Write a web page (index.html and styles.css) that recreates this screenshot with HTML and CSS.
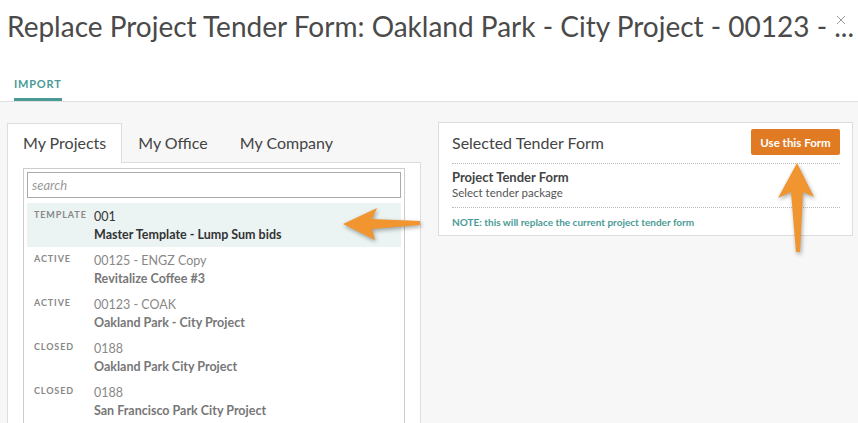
FILE: index.html
```html
<!DOCTYPE html>
<html>
<head>
    <title>Replace Project Tender Form</title>
    <link rel="stylesheet" href="styles.css">
</head>
<body>
    <div class="modal">
        <div class="modal-header">
            <h1 class="modal-title">Replace Project Tender Form: Oakland Park - City Project - 00123 - ...</h1>
            <button class="close-btn" title="Close">
                <svg width="10" height="10" viewBox="0 0 10 10"><path d="M1 1L9 9M9 1L1 9" stroke="#9a9a9a" stroke-width="1"/></svg>
            </button>
            <div class="nav-tabs">
                <span class="nav-tab active">IMPORT</span>
            </div>
        </div>

        <div class="modal-body">
            <div class="left-col">
                <div class="source-tabs">
                    <span class="source-tab active">My Projects</span>
                    <span class="source-tab">My Office</span>
                    <span class="source-tab">My Company</span>
                </div>
                <div class="source-panel">
                    <div class="project-list">
                        <input type="text" class="search" placeholder="search">
                        <div class="project-row selected">
                            <span class="status">TEMPLATE</span>
                            <div class="project-info">
                                <div class="project-num">001</div>
                                <div class="project-name">Master Template - Lump Sum bids</div>
                            </div>
                        </div>
                        <div class="project-row">
                            <span class="status">ACTIVE</span>
                            <div class="project-info">
                                <div class="project-num">00125 - ENGZ Copy</div>
                                <div class="project-name">Revitalize Coffee #3</div>
                            </div>
                        </div>
                        <div class="project-row">
                            <span class="status">ACTIVE</span>
                            <div class="project-info">
                                <div class="project-num">00123 - COAK</div>
                                <div class="project-name">Oakland Park - City Project</div>
                            </div>
                        </div>
                        <div class="project-row">
                            <span class="status">CLOSED</span>
                            <div class="project-info">
                                <div class="project-num">0188</div>
                                <div class="project-name">Oakland Park City Project</div>
                            </div>
                        </div>
                        <div class="project-row">
                            <span class="status">CLOSED</span>
                            <div class="project-info">
                                <div class="project-num">0188</div>
                                <div class="project-name">San Francisco Park City Project</div>
                            </div>
                        </div>
                    </div>
                </div>
            </div>

            <div class="right-col">
                <div class="selected-card">
                    <div class="card-head">
                        <span class="card-title">Selected Tender Form</span>
                        <button class="use-btn">Use this Form</button>
                    </div>
                    <div class="card-body">
                        <div class="form-name">Project Tender Form</div>
                        <div class="form-sub">Select tender package</div>
                    </div>
                    <div class="card-note">NOTE: this will replace the current project tender form</div>
                </div>
            </div>
        </div>

        <!-- callout arrows drawn over the screenshot -->
        <svg class="callouts" width="858" height="423" viewBox="0 0 858 423">
            <polygon points="343,224 377,208 372,219 420,221 420,225 372,229 375,240" fill="#f0952f"/>
            <polygon points="797,163 814,197 803,192 800,252 796,252 791,192 778,198" fill="#f0952f"/>
        </svg>
    </div>
</body>
</html>
```

FILE: styles.css
```css
body {
    margin: 0;
    font-family: Lato, "Open Sans", sans-serif;
    color: #444;
    background-color: #f7f7f7;
    overflow: hidden;
}

.modal {
    position: relative;
    width: 858px;
    height: 423px;
    overflow: hidden;
}

.modal-header {
    background-color: white;
    border-bottom: 1px solid #e0e0e0;
}

.modal-title {
    margin: 0;
    padding: 9px 0 0 7px;
    font-size: 28px;
    font-weight: normal;
    line-height: 34px;
    color: #4a4a4a;
    white-space: nowrap;
    overflow: hidden;
}

.close-btn {
    position: absolute;
    top: 13px;
    right: 12px;
    padding: 0;
    border: none;
    background: none;
    cursor: pointer;
}

.nav-tabs {
    display: flex;
    padding: 34px 0 0 14px;
}

.nav-tab {
    padding-bottom: 7px;
    font-size: 11px;
    font-weight: bold;
    line-height: 14px;
    letter-spacing: 0.8px;
    color: #4a9b95;
    border-bottom: 3px solid #4a9b95;
}

.modal-body {
    display: flex;
    gap: 17px;
    padding: 20px 5px 0 7px;
}

.left-col {
    width: 414px;
    margin-top: 1px;
}

.right-col {
    flex: 1;
}

.source-tabs {
    display: flex;
    height: 39px;
}

.source-tab {
    box-sizing: border-box;
    height: 39px;
    padding: 0 15px;
    font-size: 16px;
    line-height: 38px;
    color: #444;
    border: 1px solid transparent;
    border-bottom: none;
}

.source-tab.active {
    position: relative;
    height: 40px;
    background-color: white;
    border-color: #ddd;
}

.source-panel {
    height: 300px;
    padding: 5px 15px;
    background-color: white;
    border: 1px solid #ddd;
}

.project-list {
    height: 300px;
    padding: 3px;
    border: 1px solid #ccc;
}

.search {
    display: block;
    box-sizing: border-box;
    width: 100%;
    height: 26px;
    margin: 0 0 5px;
    padding: 0 4px;
    font-family: inherit;
    font-size: 13px;
    border: 1px solid #aaa;
}

.search::placeholder {
    font-style: italic;
    color: #999;
}

.project-row {
    display: flex;
    height: 44px;
    box-sizing: border-box;
    padding: 5px 7px 3px;
}

.project-row.selected {
    background-color: #ebf4f3;
}

.status {
    width: 60px;
    flex-shrink: 0;
    font-size: 9px;
    font-weight: bold;
    line-height: 14px;
    letter-spacing: 0.9px;
    color: #888;
}

.project-num {
    font-size: 12.5px;
    line-height: 18px;
    color: #888;
}

.project-name {
    font-size: 12.5px;
    font-weight: bold;
    line-height: 18px;
    color: #777;
}

.selected .project-num,
.selected .project-name {
    color: #333;
}

.selected-card {
    padding: 6px 12px 0 13px;
    background-color: white;
    border: 1px solid #ddd;
}

.card-head {
    display: flex;
    justify-content: space-between;
    align-items: center;
    padding-bottom: 8px;
    border-bottom: 1px dotted #bbb;
}

.card-title {
    font-size: 16px;
    color: #444;
}

.use-btn {
    height: 26px;
    width: 89px;
    padding: 0;
    font-family: inherit;
    font-size: 11.5px;
    font-weight: bold;
    color: white;
    background-color: #e07b24;
    border: none;
    border-radius: 2px;
    cursor: pointer;
}

.card-body {
    padding: 5px 0 6px;
    border-bottom: 1px dotted #bbb;
}

.form-name {
    font-size: 13px;
    font-weight: bold;
    line-height: 16px;
    color: #444;
}

.form-sub {
    font-size: 11.5px;
    line-height: 16px;
    color: #555;
}

.card-note {
    padding: 7px 0 6px;
    font-size: 10px;
    font-weight: bold;
    line-height: 14px;
    color: #4a9b95;
}

.callouts {
    position: absolute;
    top: 0;
    left: 0;
    pointer-events: none;
    filter: drop-shadow(1px 2px 2px rgba(0, 0, 0, 0.35));
}
```
